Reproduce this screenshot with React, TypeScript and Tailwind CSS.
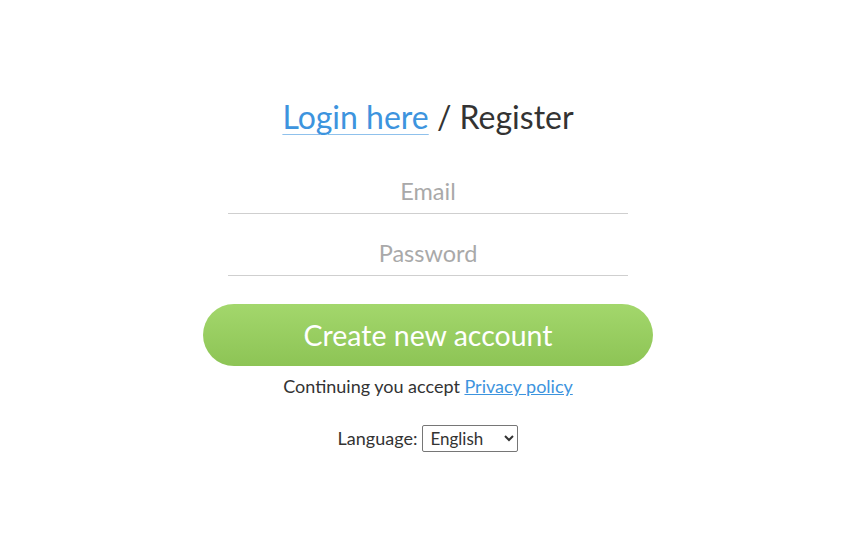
import { useState } from "react";

export default function App() {
  const [lang, setLang] = useState("en");

  return (
    <div className="flex min-h-[558px] w-full justify-center bg-white pr-[3px] font-['Lato','Open_Sans',sans-serif] text-[#333]">
      <div className="flex w-[450px] flex-col items-center pt-[97px]">
        <h1 className="text-[32px] leading-[40px]">
          <a href="#" className="text-[#3d94de] underline decoration-[#8fc1ec] decoration-1 underline-offset-[5px]">
            Login here
          </a>{" "}
          / Register
        </h1>

        <div className="mt-[36px] flex w-[400px] flex-col">
          <input
            type="email"
            placeholder="Email"
            className="h-[41px] border-b border-[#cfcfcf] pb-[5px] text-center text-[23.5px] outline-none placeholder:text-[#a9a9a9]"
          />
          <input
            type="password"
            placeholder="Password"
            className="mt-[21px] h-[41px] border-b border-[#cfcfcf] pb-[5px] text-center text-[23.5px] outline-none placeholder:text-[#a9a9a9]"
          />
        </div>

        <button className="mt-[28px] h-[62px] w-[450px] rounded-full bg-gradient-to-b from-[#a3d76c] to-[#8dc455] text-[28.5px] text-white">
          Create new account
        </button>

        <p className="mt-[8px] text-[18px] leading-[24px]">
          Continuing you accept{" "}
          <a href="#" className="text-[#3d94de] underline">
            Privacy policy
          </a>
        </p>

        <div className="mt-[27px] flex items-center gap-[5px] text-[18px]">
          <span>Language:</span>
          <select
            value={lang}
            onChange={(e) => setLang(e.target.value)}
            className="h-[27px] w-[96px] rounded-[2px] border border-[#767676] bg-white px-[3px] text-[17px] text-[#333]"
          >
            <option value="en">English</option>
            <option value="de">Deutsch</option>
          </select>
        </div>
      </div>
    </div>
  );
}
